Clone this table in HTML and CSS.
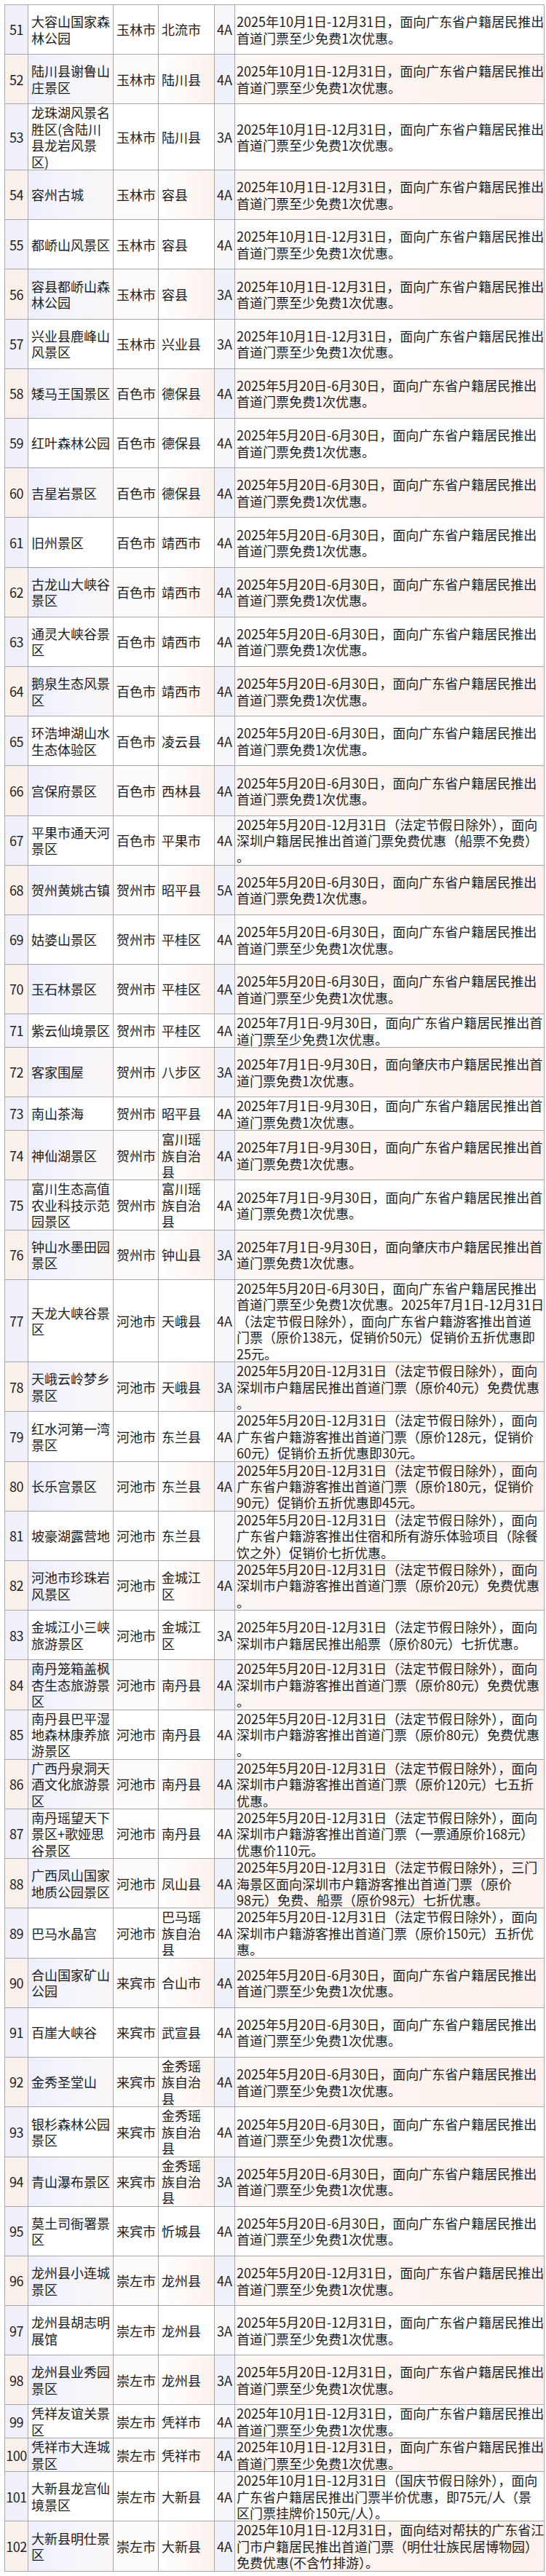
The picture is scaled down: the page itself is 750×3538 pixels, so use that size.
FILE: index.html
```html
<!DOCTYPE html>
<html lang="zh-CN">
<head>
<meta charset="utf-8">
<title>景区优惠名单</title>
<link rel="stylesheet" href="styles.css">
</head>
<body>
<table class="list">
<colgroup>
<col class="c-no"><col class="c-nm"><col class="c-ct"><col class="c-cy"><col class="c-gr"><col class="c-ds">
</colgroup>
<tbody>
<tr class="w"><td class="no">51</td><td class="nm">大容山国家森<br>林公园</td><td class="ct">玉林市</td><td class="cy">北流市</td><td class="gr">4A</td><td class="ds">2025年10月1日-12月31日，面向广东省户籍居民推出<br>首道门票至少免费1次优惠。</td></tr>
<tr class="t"><td class="no">52</td><td class="nm">陆川县谢鲁山<br>庄景区</td><td class="ct">玉林市</td><td class="cy">陆川县</td><td class="gr">4A</td><td class="ds">2025年10月1日-12月31日，面向广东省户籍居民推出<br>首道门票至少免费1次优惠。</td></tr>
<tr class="w l4"><td class="no">53</td><td class="nm">龙珠湖风景名<br>胜区(含陆川<br>县龙岩风景<br>区)</td><td class="ct">玉林市</td><td class="cy">陆川县</td><td class="gr">3A</td><td class="ds">2025年10月1日-12月31日，面向广东省户籍居民推出<br>首道门票至少免费1次优惠。</td></tr>
<tr class="t"><td class="no">54</td><td class="nm">容州古城</td><td class="ct">玉林市</td><td class="cy">容县</td><td class="gr">4A</td><td class="ds">2025年10月1日-12月31日，面向广东省户籍居民推出<br>首道门票至少免费1次优惠。</td></tr>
<tr class="w"><td class="no">55</td><td class="nm">都峤山风景区</td><td class="ct">玉林市</td><td class="cy">容县</td><td class="gr">4A</td><td class="ds">2025年10月1日-12月31日，面向广东省户籍居民推出<br>首道门票至少免费1次优惠。</td></tr>
<tr class="t"><td class="no">56</td><td class="nm">容县都峤山森<br>林公园</td><td class="ct">玉林市</td><td class="cy">容县</td><td class="gr">3A</td><td class="ds">2025年10月1日-12月31日，面向广东省户籍居民推出<br>首道门票至少免费1次优惠。</td></tr>
<tr class="w"><td class="no">57</td><td class="nm">兴业县鹿峰山<br>风景区</td><td class="ct">玉林市</td><td class="cy">兴业县</td><td class="gr">3A</td><td class="ds">2025年10月1日-12月31日，面向广东省户籍居民推出<br>首道门票至少免费1次优惠。</td></tr>
<tr class="t"><td class="no">58</td><td class="nm">矮马王国景区</td><td class="ct">百色市</td><td class="cy">德保县</td><td class="gr">4A</td><td class="ds">2025年5月20日-6月30日，面向广东省户籍居民推出<br>首道门票免费1次优惠。</td></tr>
<tr class="w"><td class="no">59</td><td class="nm">红叶森林公园</td><td class="ct">百色市</td><td class="cy">德保县</td><td class="gr">4A</td><td class="ds">2025年5月20日-6月30日，面向广东省户籍居民推出<br>首道门票免费1次优惠。</td></tr>
<tr class="t"><td class="no">60</td><td class="nm">吉星岩景区</td><td class="ct">百色市</td><td class="cy">德保县</td><td class="gr">4A</td><td class="ds">2025年5月20日-6月30日，面向广东省户籍居民推出<br>首道门票免费1次优惠。</td></tr>
<tr class="w"><td class="no">61</td><td class="nm">旧州景区</td><td class="ct">百色市</td><td class="cy">靖西市</td><td class="gr">4A</td><td class="ds">2025年5月20日-6月30日，面向广东省户籍居民推出<br>首道门票免费1次优惠。</td></tr>
<tr class="t"><td class="no">62</td><td class="nm">古龙山大峡谷<br>景区</td><td class="ct">百色市</td><td class="cy">靖西市</td><td class="gr">4A</td><td class="ds">2025年5月20日-6月30日，面向广东省户籍居民推出<br>首道门票免费1次优惠。</td></tr>
<tr class="w"><td class="no">63</td><td class="nm">通灵大峡谷景<br>区</td><td class="ct">百色市</td><td class="cy">靖西市</td><td class="gr">4A</td><td class="ds">2025年5月20日-6月30日，面向广东省户籍居民推出<br>首道门票免费1次优惠。</td></tr>
<tr class="t"><td class="no">64</td><td class="nm">鹅泉生态风景<br>区</td><td class="ct">百色市</td><td class="cy">靖西市</td><td class="gr">4A</td><td class="ds">2025年5月20日-6月30日，面向广东省户籍居民推出<br>首道门票免费1次优惠。</td></tr>
<tr class="w"><td class="no">65</td><td class="nm">环浩坤湖山水<br>生态体验区</td><td class="ct">百色市</td><td class="cy">凌云县</td><td class="gr">4A</td><td class="ds">2025年5月20日-6月30日，面向广东省户籍居民推出<br>首道门票免费1次优惠。</td></tr>
<tr class="t"><td class="no">66</td><td class="nm">宫保府景区</td><td class="ct">百色市</td><td class="cy">西林县</td><td class="gr">4A</td><td class="ds">2025年5月20日-6月30日，面向广东省户籍居民推出<br>首道门票免费1次优惠。</td></tr>
<tr class="w"><td class="no">67</td><td class="nm">平果市通天河<br>景区</td><td class="ct">百色市</td><td class="cy">平果市</td><td class="gr">4A</td><td class="ds">2025年5月20日-12月31日（法定节假日除外），面向<br>深圳户籍居民推出首道门票免费优惠（船票不免费）<br>。</td></tr>
<tr class="t"><td class="no">68</td><td class="nm">贺州黄姚古镇</td><td class="ct">贺州市</td><td class="cy">昭平县</td><td class="gr">5A</td><td class="ds">2025年5月20日-6月30日，面向广东省户籍居民推出<br>首道门票免费1次优惠。</td></tr>
<tr class="w"><td class="no">69</td><td class="nm">姑婆山景区</td><td class="ct">贺州市</td><td class="cy">平桂区</td><td class="gr">4A</td><td class="ds">2025年5月20日-6月30日，面向广东省户籍居民推出<br>首道门票至少免费1次优惠。</td></tr>
<tr class="t"><td class="no">70</td><td class="nm">玉石林景区</td><td class="ct">贺州市</td><td class="cy">平桂区</td><td class="gr">4A</td><td class="ds">2025年5月20日-6月30日，面向广东省户籍居民推出<br>首道门票至少免费1次优惠。</td></tr>
<tr class="w s"><td class="no">71</td><td class="nm">紫云仙境景区</td><td class="ct">贺州市</td><td class="cy">平桂区</td><td class="gr">4A</td><td class="ds">2025年7月1日-9月30日，面向广东省户籍居民推出首<br>道门票至少免费1次优惠。</td></tr>
<tr class="t"><td class="no">72</td><td class="nm">客家围屋</td><td class="ct">贺州市</td><td class="cy">八步区</td><td class="gr">3A</td><td class="ds">2025年7月1日-9月30日，面向肇庆市户籍居民推出首<br>道门票免费1次优惠。</td></tr>
<tr class="w s"><td class="no">73</td><td class="nm">南山茶海</td><td class="ct">贺州市</td><td class="cy">昭平县</td><td class="gr">4A</td><td class="ds">2025年7月1日-9月30日，面向广东省户籍居民推出首<br>道门票免费1次优惠。</td></tr>
<tr class="t"><td class="no">74</td><td class="nm">神仙湖景区</td><td class="ct">贺州市</td><td class="cy">富川瑶<br>族自治<br>县</td><td class="gr">4A</td><td class="ds">2025年7月1日-9月30日，面向广东省户籍居民推出首<br>道门票免费1次优惠。</td></tr>
<tr class="w"><td class="no">75</td><td class="nm">富川生态高值<br>农业科技示范<br>园景区</td><td class="ct">贺州市</td><td class="cy">富川瑶<br>族自治<br>县</td><td class="gr">4A</td><td class="ds">2025年7月1日-9月30日，面向广东省户籍居民推出首<br>道门票免费1次优惠。</td></tr>
<tr class="t"><td class="no">76</td><td class="nm">钟山水墨田园<br>景区</td><td class="ct">贺州市</td><td class="cy">钟山县</td><td class="gr">3A</td><td class="ds">2025年7月1日-9月30日，面向肇庆市户籍居民推出首<br>道门票免费1次优惠。</td></tr>
<tr class="w l5"><td class="no">77</td><td class="nm">天龙大峡谷景<br>区</td><td class="ct">河池市</td><td class="cy">天峨县</td><td class="gr">4A</td><td class="ds">2025年5月20日-6月30日，面向广东省户籍居民推出<br>首道门票至少免费1次优惠。2025年7月1日-12月31日<br>（法定节假日除外），面向广东省户籍游客推出首道<br>门票（原价138元，促销价50元）促销价五折优惠即<br>25元。</td></tr>
<tr class="t"><td class="no">78</td><td class="nm">天峨云岭梦乡<br>景区</td><td class="ct">河池市</td><td class="cy">天峨县</td><td class="gr">3A</td><td class="ds">2025年5月20日-12月31日（法定节假日除外），面向<br>深圳市户籍居民推出首道门票（原价40元）免费优惠<br>。</td></tr>
<tr class="w"><td class="no">79</td><td class="nm">红水河第一湾<br>景区</td><td class="ct">河池市</td><td class="cy">东兰县</td><td class="gr">4A</td><td class="ds">2025年5月20日-12月31日（法定节假日除外），面向<br>广东省户籍游客推出首道门票（原价128元，促销价<br>60元）促销价五折优惠即30元。</td></tr>
<tr class="t"><td class="no">80</td><td class="nm">长乐宫景区</td><td class="ct">河池市</td><td class="cy">东兰县</td><td class="gr">4A</td><td class="ds">2025年5月20日-12月31日（法定节假日除外），面向<br>广东省户籍游客推出首道门票（原价180元，促销价<br>90元）促销价五折优惠即45元。</td></tr>
<tr class="w"><td class="no">81</td><td class="nm">坡豪湖露营地</td><td class="ct">河池市</td><td class="cy">东兰县</td><td class="gr"></td><td class="ds">2025年5月20日-12月31日（法定节假日除外），面向<br>广东省户籍游客推出住宿和所有游乐体验项目（除餐<br>饮之外）促销价七折优惠。</td></tr>
<tr class="t"><td class="no">82</td><td class="nm">河池市珍珠岩<br>风景区</td><td class="ct">河池市</td><td class="cy">金城江<br>区</td><td class="gr">4A</td><td class="ds">2025年5月20日-12月31日（法定节假日除外），面向<br>深圳市户籍游客推出首道门票（原价20元）免费优惠<br>。</td></tr>
<tr class="w"><td class="no">83</td><td class="nm">金城江小三峡<br>旅游景区</td><td class="ct">河池市</td><td class="cy">金城江<br>区</td><td class="gr">3A</td><td class="ds">2025年5月20日-12月31日（法定节假日除外），面向<br>深圳市户籍居民推出船票（原价80元）七折优惠。</td></tr>
<tr class="t"><td class="no">84</td><td class="nm">南丹笼箱盖枫<br>杏生态旅游景<br>区</td><td class="ct">河池市</td><td class="cy">南丹县</td><td class="gr">4A</td><td class="ds">2025年5月20日-12月31日（法定节假日除外），面向<br>深圳市户籍游客推出首道门票（原价80元）免费优惠<br>。</td></tr>
<tr class="w"><td class="no">85</td><td class="nm">南丹县巴平湿<br>地森林康养旅<br>游景区</td><td class="ct">河池市</td><td class="cy">南丹县</td><td class="gr">4A</td><td class="ds">2025年5月20日-12月31日（法定节假日除外），面向<br>深圳市户籍游客推出首道门票（原价80元）免费优惠<br>。</td></tr>
<tr class="t"><td class="no">86</td><td class="nm">广西丹泉洞天<br>酒文化旅游景<br>区</td><td class="ct">河池市</td><td class="cy">南丹县</td><td class="gr">4A</td><td class="ds">2025年5月20日-12月31日（法定节假日除外），面向<br>深圳市户籍游客推出首道门票（原价120元）七五折<br>优惠。</td></tr>
<tr class="w"><td class="no">87</td><td class="nm">南丹瑶望天下<br>景区+歌娅思<br>谷景区</td><td class="ct">河池市</td><td class="cy">南丹县</td><td class="gr">4A</td><td class="ds">2025年5月20日-12月31日（法定节假日除外），面向<br>深圳市户籍游客推出首道门票（一票通原价168元）<br>优惠价110元。</td></tr>
<tr class="t"><td class="no">88</td><td class="nm">广西凤山国家<br>地质公园景区</td><td class="ct">河池市</td><td class="cy">凤山县</td><td class="gr">4A</td><td class="ds">2025年5月20日-12月31日（法定节假日除外），三门<br>海景区面向深圳市户籍游客推出首道门票（原价<br>98元）免费、船票（原价98元）七折优惠。</td></tr>
<tr class="w"><td class="no">89</td><td class="nm">巴马水晶宫</td><td class="ct">河池市</td><td class="cy">巴马瑶<br>族自治<br>县</td><td class="gr">4A</td><td class="ds">2025年5月20日-12月31日（法定节假日除外），面向<br>深圳市户籍游客推出首道门票（原价150元）五折优<br>惠。</td></tr>
<tr class="t"><td class="no">90</td><td class="nm">合山国家矿山<br>公园</td><td class="ct">来宾市</td><td class="cy">合山市</td><td class="gr">4A</td><td class="ds">2025年5月20日-6月30日，面向广东省户籍居民推出<br>首道门票至少免费1次优惠。</td></tr>
<tr class="w"><td class="no">91</td><td class="nm">百崖大峡谷</td><td class="ct">来宾市</td><td class="cy">武宣县</td><td class="gr">4A</td><td class="ds">2025年5月20日-6月30日，面向广东省户籍居民推出<br>首道门票至少免费1次优惠。</td></tr>
<tr class="t"><td class="no">92</td><td class="nm">金秀圣堂山</td><td class="ct">来宾市</td><td class="cy">金秀瑶<br>族自治<br>县</td><td class="gr">4A</td><td class="ds">2025年5月20日-6月30日，面向广东省户籍居民推出<br>首道门票至少免费1次优惠。</td></tr>
<tr class="w"><td class="no">93</td><td class="nm">银杉森林公园<br>景区</td><td class="ct">来宾市</td><td class="cy">金秀瑶<br>族自治<br>县</td><td class="gr">4A</td><td class="ds">2025年5月20日-6月30日，面向广东省户籍居民推出<br>首道门票至少免费1次优惠。</td></tr>
<tr class="t"><td class="no">94</td><td class="nm">青山瀑布景区</td><td class="ct">来宾市</td><td class="cy">金秀瑶<br>族自治<br>县</td><td class="gr">3A</td><td class="ds">2025年5月20日-6月30日，面向广东省户籍居民推出<br>首道门票至少免费1次优惠。</td></tr>
<tr class="w"><td class="no">95</td><td class="nm">莫土司衙署景<br>区</td><td class="ct">来宾市</td><td class="cy">忻城县</td><td class="gr">4A</td><td class="ds">2025年5月20日-6月30日，面向广东省户籍居民推出<br>首道门票至少免费1次优惠。</td></tr>
<tr class="t"><td class="no">96</td><td class="nm">龙州县小连城<br>景区</td><td class="ct">崇左市</td><td class="cy">龙州县</td><td class="gr">4A</td><td class="ds">2025年5月20日-12月31日，面向广东省户籍居民推出<br>首道门票至少免费1次优惠。</td></tr>
<tr class="w"><td class="no">97</td><td class="nm">龙州县胡志明<br>展馆</td><td class="ct">崇左市</td><td class="cy">龙州县</td><td class="gr">3A</td><td class="ds">2025年5月20日-12月31日，面向广东省户籍居民推出<br>首道门票至少免费1次优惠。</td></tr>
<tr class="t"><td class="no">98</td><td class="nm">龙州县业秀园<br>景区</td><td class="ct">崇左市</td><td class="cy">龙州县</td><td class="gr">3A</td><td class="ds">2025年5月20日-12月31日，面向广东省户籍居民推出<br>首道门票至少免费1次优惠。</td></tr>
<tr class="w s"><td class="no">99</td><td class="nm">凭祥友谊关景<br>区</td><td class="ct">崇左市</td><td class="cy">凭祥市</td><td class="gr">4A</td><td class="ds">2025年10月1日-12月31日，面向广东省户籍居民推出<br>首道门票至少免费1次优惠。</td></tr>
<tr class="t s"><td class="no">100</td><td class="nm">凭祥市大连城<br>景区</td><td class="ct">崇左市</td><td class="cy">凭祥市</td><td class="gr">4A</td><td class="ds">2025年10月1日-12月31日，面向广东省户籍居民推出<br>首道门票至少免费1次优惠。</td></tr>
<tr class="w"><td class="no">101</td><td class="nm">大新县龙宫仙<br>境景区</td><td class="ct">崇左市</td><td class="cy">大新县</td><td class="gr">4A</td><td class="ds">2025年10月1日-12月31日（国庆节假日除外），面向<br>广东省户籍居民推出门票半价优惠，即75元/人（景<br>区门票挂牌价150元/人）。</td></tr>
<tr class="t"><td class="no">102</td><td class="nm">大新县明仕景<br>区</td><td class="ct">崇左市</td><td class="cy">大新县</td><td class="gr">4A</td><td class="ds">2025年10月1日-12月31日，面向结对帮扶的广东省江<br>门市户籍居民推出首道门票（明仕壮族民居博物园）<br>免费优惠(不含竹排游）。</td></tr>
</tbody>
</table>
</body>
</html>
```
FILE: styles.css
```css
html, body {
  margin: 0;
  padding: 0;
  background: #ffffff;
}
body {
  font-family: "Noto Sans CJK SC", "Noto Sans CJK TC", sans-serif;
  font-size: 18px;
  line-height: 22.4px;
  color: #1c1c1c;
}
.list {
  margin: 6px 0 0 6px;
  width: 741px;
  table-layout: fixed;
  border-collapse: collapse;
}
.c-no { width: 32px; }
.c-nm { width: 117px; }
.c-ct { width: 62px; }
.c-cy { width: 77px; }
.c-gr { width: 28px; }
.c-ds { width: 425px; }

.list td {
  border: 1px solid #a8a8a8;
  padding: 0 1px 0 4px;
  vertical-align: middle;
  white-space: nowrap;
  text-align: left;
}
.list tr { height: 68.2px; }
.list tr.s { height: 45.6px; }
.list tr.l4 { height: 90.7px; }
.list tr.l5 { height: 113.4px; }

.list td.no {
  padding: 0;
  text-align: center;
  letter-spacing: -0.5px;
}
.list td.gr {
  padding: 0;
  text-align: center;
}
.list td.ds {
  padding: 0 0 0 2px;
}

/* subtle tints as in the source sheet */
.w td.no { background: #eff0fa; }
.w td.gr { background: #f6f6fb; }
.t td.no { background: #fbf1ec; }
.t td.nm { background: linear-gradient(90deg, #eceffb 0%, #f6f5fa 60%, #fbf6f4 100%); }
.t td.ct { background: #fdfafa; }
.t td.cy { background: linear-gradient(90deg, #ffffff 0%, #fcf1ec 100%); }
.t td.gr { background: #eef0fa; }
.t td.ds { background: linear-gradient(90deg, #fdf7f4 0%, #fcf1ec 100%); }
```
